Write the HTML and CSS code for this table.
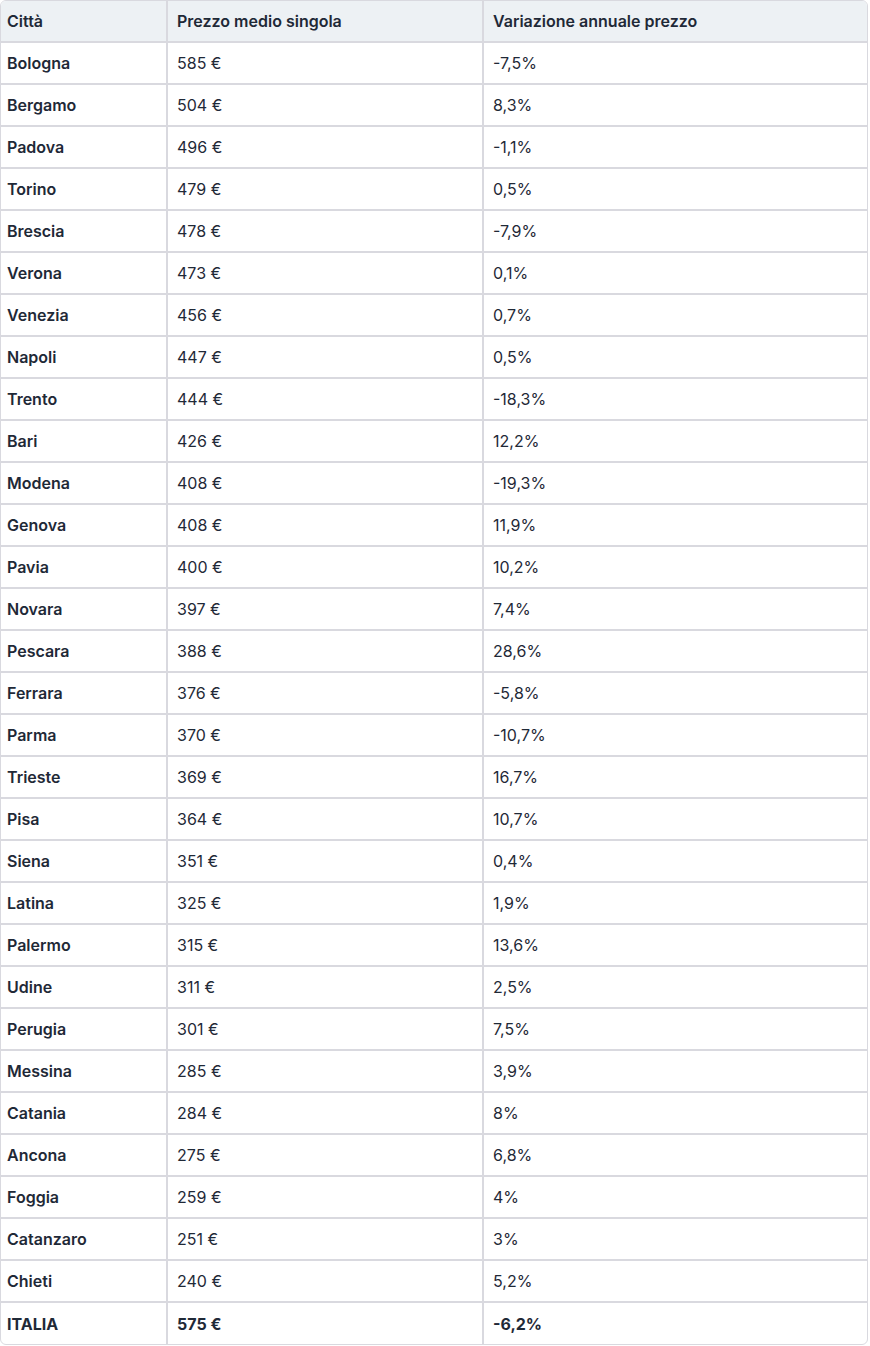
FILE: index.html
```html
<!DOCTYPE html>
<html lang="it">
<head>
<meta charset="utf-8">
<link rel="stylesheet" href="styles.css">
</head>
<body>
<div class="wrap">
<table class="tbl">
<colgroup><col class="c1"><col class="c2"><col class="c3"></colgroup>
<thead>
<tr><th>Città</th><th>Prezzo medio singola</th><th>Variazione annuale prezzo</th></tr>
</thead>
<tbody>
<tr><td class="city">Bologna</td><td>585 €</td><td>-7,5%</td></tr>
<tr><td class="city">Bergamo</td><td>504 €</td><td>8,3%</td></tr>
<tr><td class="city">Padova</td><td>496 €</td><td>-1,1%</td></tr>
<tr><td class="city">Torino</td><td>479 €</td><td>0,5%</td></tr>
<tr><td class="city">Brescia</td><td>478 €</td><td>-7,9%</td></tr>
<tr><td class="city">Verona</td><td>473 €</td><td>0,1%</td></tr>
<tr><td class="city">Venezia</td><td>456 €</td><td>0,7%</td></tr>
<tr><td class="city">Napoli</td><td>447 €</td><td>0,5%</td></tr>
<tr><td class="city">Trento</td><td>444 €</td><td>-18,3%</td></tr>
<tr><td class="city">Bari</td><td>426 €</td><td>12,2%</td></tr>
<tr><td class="city">Modena</td><td>408 €</td><td>-19,3%</td></tr>
<tr><td class="city">Genova</td><td>408 €</td><td>11,9%</td></tr>
<tr><td class="city">Pavia</td><td>400 €</td><td>10,2%</td></tr>
<tr><td class="city">Novara</td><td>397 €</td><td>7,4%</td></tr>
<tr><td class="city">Pescara</td><td>388 €</td><td>28,6%</td></tr>
<tr><td class="city">Ferrara</td><td>376 €</td><td>-5,8%</td></tr>
<tr><td class="city">Parma</td><td>370 €</td><td>-10,7%</td></tr>
<tr><td class="city">Trieste</td><td>369 €</td><td>16,7%</td></tr>
<tr><td class="city">Pisa</td><td>364 €</td><td>10,7%</td></tr>
<tr><td class="city">Siena</td><td>351 €</td><td>0,4%</td></tr>
<tr><td class="city">Latina</td><td>325 €</td><td>1,9%</td></tr>
<tr><td class="city">Palermo</td><td>315 €</td><td>13,6%</td></tr>
<tr><td class="city">Udine</td><td>311 €</td><td>2,5%</td></tr>
<tr><td class="city">Perugia</td><td>301 €</td><td>7,5%</td></tr>
<tr><td class="city">Messina</td><td>285 €</td><td>3,9%</td></tr>
<tr><td class="city">Catania</td><td>284 €</td><td>8%</td></tr>
<tr><td class="city">Ancona</td><td>275 €</td><td>6,8%</td></tr>
<tr><td class="city">Foggia</td><td>259 €</td><td>4%</td></tr>
<tr><td class="city">Catanzaro</td><td>251 €</td><td>3%</td></tr>
<tr><td class="city">Chieti</td><td>240 €</td><td>5,2%</td></tr>
<tr class="total"><td class="city">ITALIA</td><td>575 €</td><td>-6,2%</td></tr>
</tbody>
</table>
</div>
</body>
</html>
```

FILE: styles.css
```css
html, body {
  margin: 0;
  padding: 0;
  background: #ffffff;
}
body {
  font-family: Inter, "Noto Sans", sans-serif;
  font-size: 16px;
  color: #1f2937;
}
.wrap {
  width: 866px;
  border: 1px solid #d9d9df;
  border-radius: 6px;
  overflow: hidden;
}
.tbl {
  width: 100%;
  border-collapse: separate;
  border-spacing: 0;
  table-layout: fixed;
}
.c1 { width: 165px; }
.c2 { width: 316px; }
.c3 { width: auto; }
.tbl th, .tbl td {
  height: 42px;
  box-sizing: border-box;
  padding: 0 9px 0 6px;
  text-align: left;
  vertical-align: middle;
  border: 0;
  border-bottom: 2px solid #d9d9df;
  line-height: 20px;
}
.tbl th:nth-child(n+2), .tbl td:nth-child(n+2) {
  border-left: 2px solid #d9d9df;
  padding-left: 9px;
}
.tbl tbody tr:last-child td { border-bottom: 0; height: 41px; }
.tbl th {
  background: #edf1f4;
  font-weight: 600;
}
.city { font-weight: 600; }
.total td { font-weight: 700; }
```
